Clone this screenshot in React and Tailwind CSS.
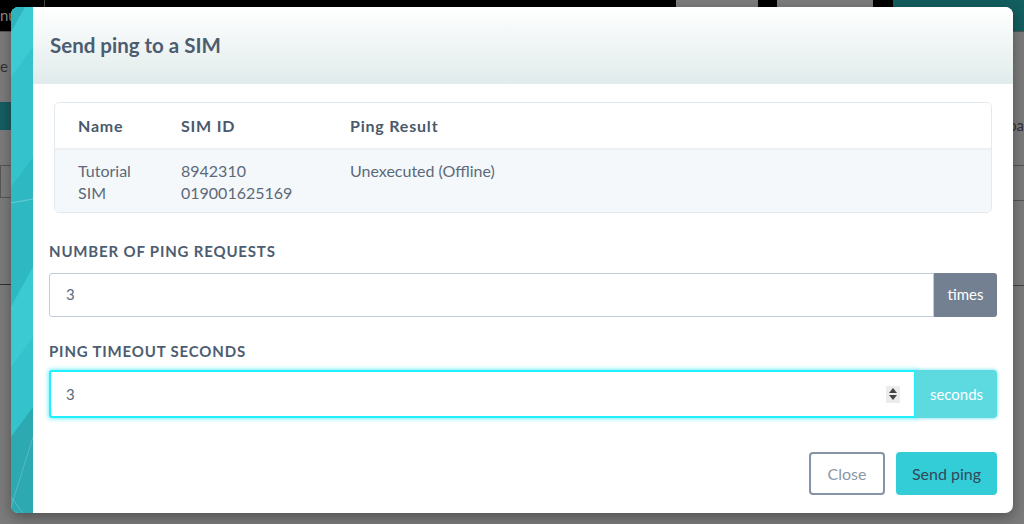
import React from "react";

function Stripe() {
  return (
    <div className="relative w-[22px] shrink-0 overflow-hidden bg-[#34c3cc]">
      <svg className="absolute inset-0 h-full w-full" viewBox="0 0 22 506" preserveAspectRatio="none">
        <polygon points="0,0 22,0 22,40 0,70" fill="#3ccbd3" />
        <polygon points="0,0 14,0 0,25" fill="#2fb3bc" />
        <polygon points="0,180 22,150 22,260 0,300" fill="#2eb9c2" />
        <polygon points="0,300 22,260 22,330 0,360" fill="#3ccad2" />
        <polygon points="0,430 22,400 22,506 0,506" fill="#2ca9b1" />
        <line x1="0" y1="196" x2="22" y2="192" stroke="#ffffff" strokeOpacity="0.35" strokeWidth="0.8" />
        <line x1="0" y1="500" x2="22" y2="430" stroke="#ffffff" strokeOpacity="0.25" strokeWidth="0.8" />
        <line x1="0" y1="490" x2="22" y2="520" stroke="#ffffff" strokeOpacity="0.25" strokeWidth="0.8" />
      </svg>
    </div>
  );
}

function Spinner() {
  return (
    <div className="flex h-[17px] w-[14px] flex-col items-center justify-center gap-[2px] bg-[#ececec]">
      <svg width="8" height="5" viewBox="0 0 8 5"><polygon points="4,0 8,5 0,5" fill="#444" /></svg>
      <svg width="8" height="5" viewBox="0 0 8 5"><polygon points="0,0 8,0 4,5" fill="#444" /></svg>
    </div>
  );
}

export default function App() {
  const font = { fontFamily: "Lato, 'Noto Sans', sans-serif" };
  return (
    <div className="relative h-[524px] w-[1024px] overflow-hidden bg-[#7b7b7b]" style={font}>
      {/* dimmed background page */}
      <div className="flex h-[31px] items-stretch bg-[#000000]">
        <div className="flex w-[45px] items-center border-r border-[#444] pl-0 text-[15px] text-[#888]">nu</div>
        <div className="flex-1" />
        <div className="mr-[19px] w-[82px] bg-[#7d7d7d]" />
        <div className="mr-[20px] w-[96px] bg-[#7d7d7d]" />
        <div className="w-[131px] bg-[#135e5f]" />
      </div>
      <div className="flex h-[1px] bg-[#555]" />
      <div className="absolute left-0 top-[55px] text-[15px] text-[#333]">e u</div>
      <div className="absolute left-0 top-[102px] h-[28px] w-[12px] bg-[#155e60]" />
      <div className="absolute left-0 top-[165px] h-[33px] w-[12px] border border-[#555]" />
      <div className="absolute left-0 top-[284px] h-[1px] w-[12px] bg-[#333]" />
      <div className="absolute right-0 top-[114px] text-[15px] text-[#333]">oa</div>
      <div className="absolute right-0 top-[165px] h-[1px] w-[11px] bg-[#555]" />
      <div className="absolute right-0 top-[200px] h-[1px] w-[11px] bg-[#555]" />
      <div className="absolute right-0 top-[285px] h-[1px] w-[11px] bg-[#444]" />

      {/* modal */}
      <div className="absolute left-[11px] top-[7px] flex h-[506px] w-[1002px] overflow-hidden rounded-[8px] bg-white shadow-[0_4px_14px_rgba(0,0,0,0.35)]">
        <Stripe />
        <div className="flex flex-1 flex-col">
          <div className="flex h-[77px] items-center bg-gradient-to-b from-[#ffffff] to-[#e1ebeb] pl-[17px]">
            <h1 className="text-[20.5px] font-bold text-[#4c5d70]">Send ping to a SIM</h1>
          </div>
          <div className="flex flex-1 flex-col px-[16px] pt-[18px]">
            <div className="mx-[5px] overflow-hidden rounded-[5px] border border-[#e2e9ef]">
              <div className="grid h-[45px] grid-cols-[103px_169px_1fr] items-center bg-white pl-[23px] text-[16px] font-bold tracking-[0.05em] text-[#4a5a6c]">
                <div>Name</div>
                <div>SIM ID</div>
                <div>Ping Result</div>
              </div>
              <div className="grid h-[64px] grid-cols-[103px_169px_1fr] bg-[#f5f8fb] pl-[23px] pt-[12px] text-[16px] leading-[22px] text-[#5b6979] shadow-[inset_0_3px_3px_-2px_rgba(0,0,0,0.06)]">
                <div>Tutorial<br />SIM</div>
                <div>8942310<br />019001625169</div>
                <div>Unexecuted (Offline)</div>
              </div>
            </div>

            <div className="mt-[27px] text-[15px] font-bold tracking-[0.055em] text-[#4d5d71]">NUMBER OF PING REQUESTS</div>
            <div className="mt-[10px] flex h-[44px]">
              <div className="flex flex-1 items-center rounded-l-[3px] border border-[#c3cbd5] bg-white pl-[16px] text-[15px] text-[#5b6979]">3</div>
              <div className="flex w-[63px] items-center justify-center rounded-r-[3px] bg-[#738092] text-[15px] text-white">times</div>
            </div>

            <div className="mt-[23px] text-[15px] font-bold tracking-[0.055em] text-[#4d5d71]">PING TIMEOUT SECONDS</div>
            <div className="mt-[8px] flex h-[48px]">
              <div className="flex flex-1 items-center justify-between rounded-l-[3px] border-[2px] border-[#1ef0ff] bg-white pl-[15px] pr-[14px] text-[15px] text-[#5b6979] shadow-[0_0_4px_1px_rgba(40,230,245,0.6)]">
                <span>3</span>
                <Spinner />
              </div>
              <div className="flex w-[81px] items-center justify-center rounded-r-[4px] bg-[#5dd9e0] text-[15px] text-white shadow-[0_0_3px_1px_rgba(90,225,235,0.6)]">seconds</div>
            </div>

            <div className="mt-[34px] flex justify-end gap-[11px]">
              <button className="h-[43px] w-[76px] rounded-[4px] border-[2px] border-[#8493a6] bg-white text-[16px] text-[#8a97a8]">Close</button>
              <button className="h-[43px] w-[101px] rounded-[4px] bg-[#33cdd8] text-[16px] text-[#354759]">Send ping</button>
            </div>
          </div>
        </div>
      </div>
    </div>
  );
}
